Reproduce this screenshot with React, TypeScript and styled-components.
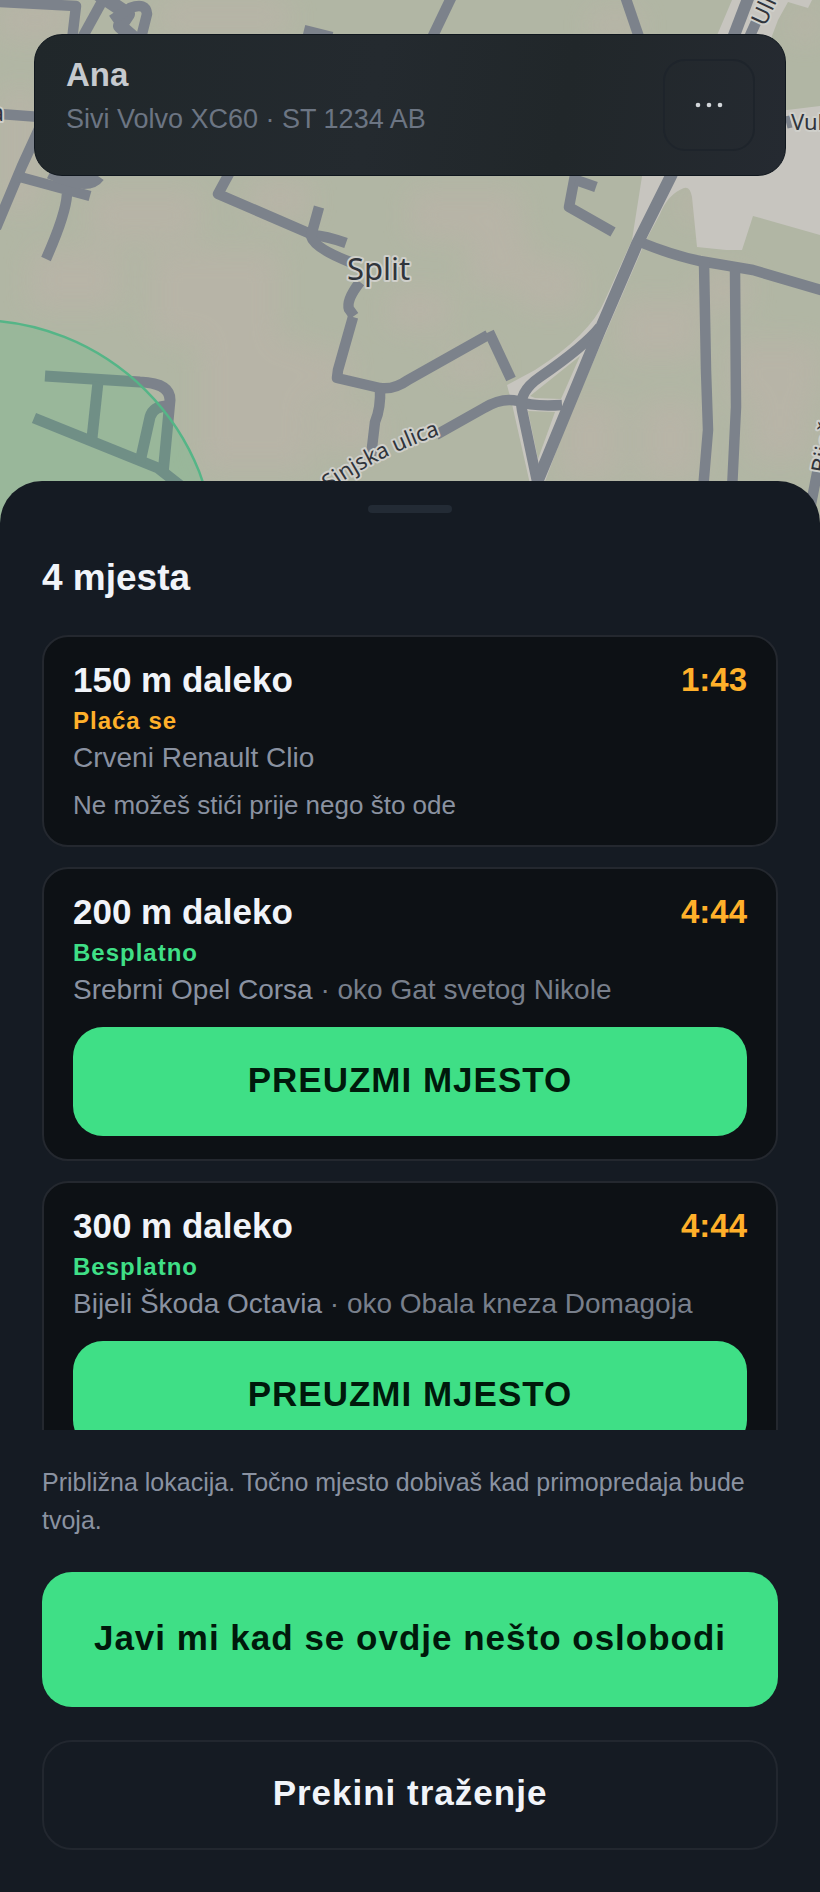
import React from "react";
import styled, { createGlobalStyle } from "styled-components";

const GlobalStyle = createGlobalStyle`
  *, *::before, *::after { box-sizing: border-box; }
  body {
    margin: 0;
    background: #151b23;
    color: #f1f4f9;
    font-family: "Liberation Sans", Arial, sans-serif;
  }
  h1, h2, p, ul { margin: 0; padding: 0; }
  button { font: inherit; cursor: pointer; }
`;

const Page = styled.main`
  display: flex;
  flex-direction: column;
  height: 100vh;
`;

const MapArea = styled.section`
  display: grid;
  flex: none;
  overflow: hidden;
  background: #b2b6a3;
  > * {
    grid-area: 1 / 1;
  }
`;

const MapDrawing = styled.svg`
  display: block;
  width: 100%;
  height: 540px;
  font-family: "Noto Sans", sans-serif;
`;

const DriverBar = styled.header`
  position: relative;
  display: flex;
  align-items: center;
  align-self: start;
  justify-content: space-between;
  margin: 34px;
  padding: 24px 30px 24px 31px;
  border: 1px solid #10171e;
  border-radius: 28px;
  background: linear-gradient(100deg, #20272a, #242a2f 45%, #21272a 70%, #252a31);
`;

const DriverText = styled.div`
  align-self: flex-start;
  display: flex;
  flex-direction: column;
  gap: 12px;
`;

const DriverName = styled.h1`
  color: #c6cacf;
  font-size: 33px;
  line-height: 32px;
`;

const DriverCar = styled.p`
  color: #6c7583;
  font-size: 27px;
  line-height: 32px;
`;

const MoreButton = styled.button`
  display: grid;
  place-items: center;
  width: 92px;
  height: 92px;
  padding: 0;
  border: 2px solid #1e242b;
  border-radius: 22px;
  background: transparent;
`;

const Sheet = styled.section`
  position: relative;
  display: flex;
  flex: 1;
  flex-direction: column;
  min-height: 0;
  margin-top: -59px;
  padding: 24px 42px 42px;
  border-radius: 42px 42px 0 0;
  background: #151b23;
`;

const Handle = styled.div`
  flex: none;
  align-self: center;
  width: 84px;
  height: 8px;
  border-radius: 4px;
  background: #232b35;
`;

const SheetTitle = styled.h2`
  margin: 43px 0 35px;
  font-size: 37px;
  line-height: 44px;
`;

const SpotList = styled.ul`
  display: flex;
  flex: 1;
  flex-direction: column;
  gap: 20px;
  min-height: 0;
  overflow-y: auto;
  scrollbar-width: none;
  list-style: none;
`;

const SpotCard = styled.li`
  display: flex;
  flex: none;
  flex-direction: column;
  gap: 4px;
  padding: 23px 29px;
  border: 2px solid #24282f;
  border-radius: 26px;
  background: #0d1115;
`;

const SpotHead = styled.div`
  display: flex;
  justify-content: space-between;
  line-height: 40px;
`;

const Distance = styled.h3`
  margin: 0;
  font-size: 35px;
`;

const Countdown = styled.time`
  color: #ffb02a;
  font-size: 33px;
  font-weight: 700;
`;

const Price = styled.p<{ $paid: boolean }>`
  color: ${(p) => (p.$paid ? "#ffb02a" : "#3fdf86")};
  font-size: 24px;
  font-weight: 700;
  letter-spacing: 1px;
  line-height: 34px;
`;

const Car = styled.p`
  color: #8a92a1;
  font-size: 28px;
  line-height: 32px;
`;

const Near = styled.span`
  color: #787f8b;
`;

const SpotNote = styled.p`
  margin-top: 10px;
  color: #8a92a1;
  font-size: 26px;
  line-height: 34px;
`;

const ActionButton = styled.button<{ $kind: "claim" | "primary" | "quiet" }>`
  flex: none;
  min-height: ${(p) => (p.$kind === "primary" ? 135 : p.$kind === "quiet" ? 110 : 109)}px;
  margin-top: ${(p) => (p.$kind === "claim" ? 17 : 33)}px;
  padding: 0 24px 4px;
  border: ${(p) => (p.$kind === "quiet" ? "2px solid #22272f" : "0")};
  border-radius: 30px;
  background: ${(p) => (p.$kind === "quiet" ? "transparent" : "#3fdf86")};
  color: ${(p) => (p.$kind === "quiet" ? "#f1f4f9" : "#00190b")};
  font-size: 35px;
  font-weight: 700;
  letter-spacing: 1px;
  line-height: 40px;
`;

const Notice = styled.p`
  margin-top: 33px;
  color: #8a92a1;
  font-size: 25px;
  line-height: 38px;
`;

const ROAD = "#7c828b";
const PALE = "#c7c5bf";

const PATCHES: [number, number, number, number][] = [
  [0, 0, 70, 40], [160, 0, 130, 34], [0, 90, 40, 120], [90, 190, 110, 50],
  [150, 250, 130, 90], [30, 250, 90, 60], [250, 180, 60, 40], [200, 340, 110, 130],
  [290, 350, 60, 50], [410, 190, 110, 50], [470, 230, 60, 60], [520, 260, 60, 50],
  [590, 10, 50, 30], [445, 350, 50, 30], [620, 300, 80, 60], [640, 400, 60, 80],
  [730, 340, 90, 60], [560, 400, 60, 80], [790, 10, 30, 30], [680, 190, 30, 30],
  [390, 290, 60, 40], [750, 400, 60, 60], [320, 410, 60, 40], [700, 270, 50, 40],
];

function CityMap() {
  return (
    <MapDrawing viewBox="0 0 820 540" preserveAspectRatio="xMidYMin slice" role="img" aria-label="Split">
      <defs>
        <filter id="soft" x="-20%" y="-20%" width="140%" height="140%">
          <feGaussianBlur stdDeviation="14" />
        </filter>
        <path id="sinjska" d="M329 491 Q372 459 442 434" />
      </defs>
      <rect width="820" height="540" fill="#b1b6a4" />
      <g filter="url(#soft)" fill="#bab4a8" opacity="0.75">
        {PATCHES.map(([x, y, w, h]) => (
          <rect key={`${x}-${y}`} x={x} y={y} width={w} height={h} />
        ))}
      </g>

      <g fill={PALE}>
        <path d="M732 0H812L808 8L788 2L778 20L772 36L770 60H706L718 33Z" />
        <path d="M643 170L690 100L787 110L820 106V235L753 216L742 250H726L697 247L692 197Q690 186 684 188Q668 194 660 214L646 240L568 420L544 484H530L512 404L507 385L535 370Q590 335 605 300L632 240Z" />
      </g>
      <g fill="#b1b6a3">
        <path d="M580 356L530 396L535 398L561 399Z" />
        <path d="M528 411L555 412L538 459Z" />
      </g>

      <g fill="none" stroke={ROAD} strokeWidth="10.5" strokeLinejoin="round">
        <path d="M-2 2L76 6L72 40" />
        <path d="M104 -2L82 38" />
        <path d="M98 -6L128 14L120 26L136 40" strokeWidth="14" />
        <path d="M112 20L130 8Q146 2 147 14L140 42" />
        <path d="M0 114L40 117" />
        <path d="M44 118L22 166L-4 228" />
        <path d="M20 177L90 196" />
        <path d="M50 172Q88 190 98 176" strokeWidth="14" />
        <path d="M67 194Q66 214 46 259" />
        <path d="M304 30L332 37" />
        <path d="M231 170L218 194L313 235Q326 236 346 243" />
        <path d="M319 207L311 236Q314 248 350 262" />
        <path d="M360 282Q346 300 349 309L354 316" />
        <path d="M353 317L338 370L337 378L380 388Q394 390 408 380L488 335" />
        <path d="M489 332L511 379" />
        <path d="M380 388Q381 408 375 422L371 456" />
        <path d="M436 435L484 408Q502 397 518 401Q532 407 562 405" />
        <path d="M452 -4L430 42" />
        <path d="M625 -4L640 40" />
        <path d="M757 20L748 40" />
        <path d="M576 170L569 207L613 232" />
        <path d="M576 180L596 187" />
        <path d="M640 242Q672 255 700 261L753 270L824 291" />
        <path d="M704 262L706 370L708 430L703 490" />
        <path d="M735 268L736 407L732 490" />
        <path d="M818 468L806 530" />
        <path d="M600 327Q585 346 540 377Q518 392 522 410L538 486" />
        <path d="M787 116L790 128" strokeWidth="5" />
      </g>
      <path d="M749 -4L733 38" fill="none" stroke={ROAD} strokeWidth="12" />
      <path d="M700 110L671 176L637 244L600 330L538 480" fill="none" stroke={ROAD} strokeWidth="12" />
      <g fill="none" stroke={ROAD} strokeWidth="11">
        <path d="M45 376L140 382Q170 383 170 400L163 474" />
        <path d="M98 382L92 438" />
        <path d="M34 418L158 468L186 490" />
        <path d="M140 462L150 417Q153 406 168 406" />
      </g>

      <circle cx="-24" cy="560" r="240" fill="#48b878" fillOpacity="0.23" stroke="#55b587" strokeWidth="2.5" />

      <g fill="#30343b" stroke="#cfcfca" strokeWidth="4" strokeLinejoin="round" paintOrder="stroke">
        <text x="347" y="280" fontSize="31">Split</text>
        <text fontSize="22">
          <textPath href="#sinjska">Sinjska ulica</textPath>
        </text>
        <text transform="translate(765 27) rotate(-65)" fontSize="23">Ulica</text>
        <text x="791" y="130" fontSize="22">Vul</text>
        <text transform="translate(827 474) rotate(-80)" fontSize="23">Bijač</text>
        <text x="-9" y="121" fontSize="23">a</text>
      </g>
    </MapDrawing>
  );
}

interface Spot {
  distance: string;
  left: string;
  paid: boolean;
  car: string;
  near?: string;
  note?: string;
}

const SPOTS: Spot[] = [
  { distance: "150 m daleko", left: "1:43", paid: true, car: "Crveni Renault Clio", note: "Ne možeš stići prije nego što ode" },
  { distance: "200 m daleko", left: "4:44", paid: false, car: "Srebrni Opel Corsa", near: "oko Gat svetog Nikole" },
  { distance: "300 m daleko", left: "4:44", paid: false, car: "Bijeli Škoda Octavia", near: "oko Obala kneza Domagoja" },
];

export default function App() {
  return (
    <>
      <GlobalStyle />
      <Page>
        <MapArea>
          <CityMap />
          <DriverBar>
            <DriverText>
              <DriverName>Ana</DriverName>
              <DriverCar>Sivi Volvo XC60 · ST 1234 AB</DriverCar>
            </DriverText>
            <MoreButton type="button" aria-haspopup="menu">
              <svg width="30" height="8" viewBox="0 0 30 8" fill="#d3d6da" aria-hidden="true">
                <circle cx="4" cy="4" r="2.3" />
                <circle cx="15" cy="4" r="2.3" />
                <circle cx="26" cy="4" r="2.3" />
              </svg>
            </MoreButton>
          </DriverBar>
        </MapArea>
        <Sheet>
          <Handle />
          <SheetTitle>4 mjesta</SheetTitle>
          <SpotList>
            {SPOTS.map((spot) => (
              <SpotCard key={spot.distance}>
                <SpotHead>
                  <Distance>{spot.distance}</Distance>
                  <Countdown>{spot.left}</Countdown>
                </SpotHead>
                <Price $paid={spot.paid}>{spot.paid ? "Plaća se" : "Besplatno"}</Price>
                <Car>
                  {spot.car}
                  {spot.near && <Near> · {spot.near}</Near>}
                </Car>
                {spot.note ? (
                  <SpotNote>{spot.note}</SpotNote>
                ) : (
                  <ActionButton type="button" $kind="claim">PREUZMI MJESTO</ActionButton>
                )}
              </SpotCard>
            ))}
          </SpotList>
          <Notice>Približna lokacija. Točno mjesto dobivaš kad primopredaja bude tvoja.</Notice>
          <ActionButton type="button" $kind="primary">Javi mi kad se ovdje nešto oslobodi</ActionButton>
          <ActionButton type="button" $kind="quiet">Prekini traženje</ActionButton>
        </Sheet>
      </Page>
    </>
  );
}
